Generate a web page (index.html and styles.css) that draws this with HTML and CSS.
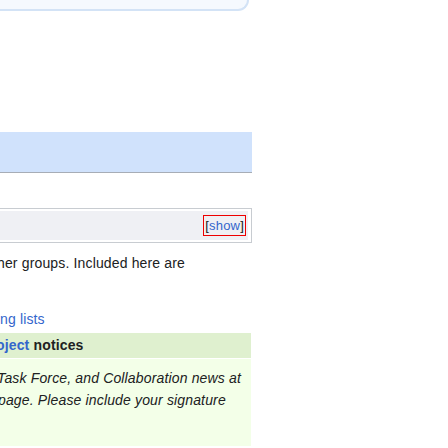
FILE: index.html
```html
<!DOCTYPE html>
<html>
<head>
<meta charset="utf-8">
<link rel="stylesheet" href="styles.css">
</head>
<body>
<div class="page">
  <div class="topbox"></div>
  <div class="band"></div>
  <div class="navbox">
    <div class="navbox-inner">
      <span class="toggle">[<span class="wikilink">show</span>]</span>
    </div>
  </div>
  <p class="intro"><span class="cut cut-3">her groups. Included here are</span></p>
  <p class="listlink"><span class="cut cut-0 wikilink">ng lists</span></p>
  <div class="notices">
    <div class="notices-head"><span class="cut cut-4"><span class="wikilink">oject</span> notices</span></div>
    <div class="notices-body">
      <div class="line cut cut-3">Task Force, and Collaboration news at</div>
      <div class="line cut cut-2">page. Please include your signature</div>
    </div>
  </div>
</div>
</body>
</html>
```
FILE: styles.css
```css
html, body {
  margin: 0;
  padding: 0;
  background: #ffffff;
  overflow: hidden;
}
body {
  font-family: "Liberation Sans", Arial, sans-serif;
  font-size: 14px;
  letter-spacing: 0.15px;
  color: #202122;
}
.page {
  width: 252px;
}
.topbox {
  box-sizing: border-box;
  margin-left: -20px;
  width: 269px;
  height: 11px;
  background: #f5f9fe;
  border: 2px solid #d3e3f6;
  border-top: none;
  border-radius: 0 0 12px 0;
}
.band {
  margin-top: 121px;
  margin-left: -20px;
  width: 272px;
  height: 40px;
  background: #d0e2fc;
  border-bottom: 1px solid #a7adb6;
}
.navbox {
  box-sizing: border-box;
  margin-top: 35px;
  margin-left: -20px;
  width: 272px;
  height: 35px;
  border: 1px solid #c8ccd1;
  padding: 2px 3px 2px 2px;
  background: #ffffff;
}
.navbox-inner {
  height: 29px;
  background: #eff0f4;
  display: flex;
  justify-content: flex-end;
  align-items: center;
}
.toggle {
  font-size: 13px;
  letter-spacing: 0.2px;
  line-height: 17px;
  padding: 1px 1px;
  border: 1px solid #ee0000;
  margin-right: 2px;
  color: #202122;
}
.cut {
  display: inline-block;
  white-space: nowrap;
}
.cut-0 { margin-left: 0; }
.cut-2 { margin-left: -2px; }
.cut-3 { margin-left: -3px; }
.cut-4 { margin-left: -4px; }
.intro {
  margin: 9px 0 0 0;
  line-height: 22px;
}
.listlink {
  margin: 34px 0 0 0;
  line-height: 22px;
}
.notices {
  margin-top: 3px;
  width: 251px;
}
.notices-head {
  background: #dff0cf;
  font-weight: bold;
  line-height: 22px;
  padding: 1px 0 2px 0;
  border-bottom: 1px solid #ffffff;
}
.notices-body {
  background: #f3ffe8;
  font-style: italic;
  line-height: 22px;
  padding: 8px 0 35px 0;
}
.line {
  display: block;
}
.wikilink {
  color: #3366cc;
}
```
